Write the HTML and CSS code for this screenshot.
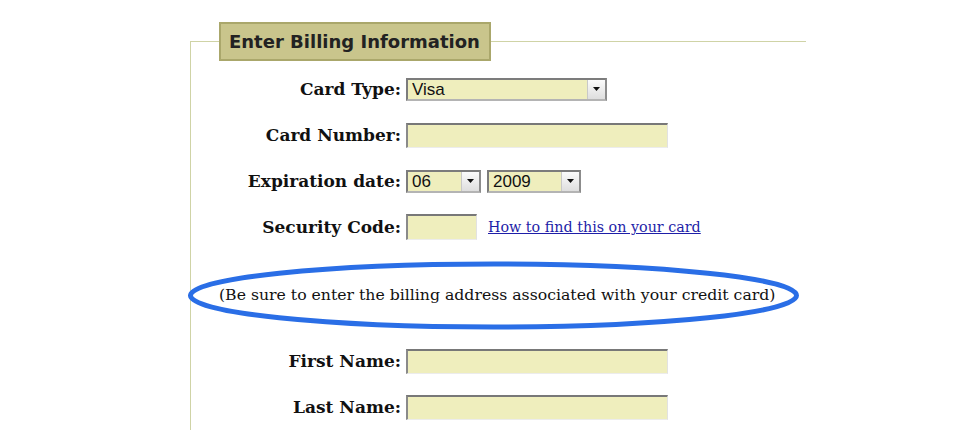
FILE: index.html
```html
<!DOCTYPE html>
<html lang="en">
<head>
  <meta charset="UTF-8" />
  <title>Billing Information</title>
  <link rel="stylesheet" href="styles.css">
</head>
<body>
  <form class="billing">
    <fieldset>
      <legend>Enter Billing Information</legend>

      <div class="row">
        <label for="cardType">Card Type:</label>
        <span class="select-box wide">
          <select id="cardType">
            <option>Visa</option>
            <option>MasterCard</option>
            <option>American Express</option>
          </select>
          <span class="arrow"><svg width="7" height="4" viewBox="0 0 7 4"><path d="M0 0h7L3.5 4z" fill="#111"/></svg></span>
        </span>
      </div>

      <div class="row">
        <label for="cardNumber">Card Number:</label>
        <input type="text" id="cardNumber" class="text long">
      </div>

      <div class="row">
        <label for="expMonth">Expiration date:</label>
        <span class="select-box month">
          <select id="expMonth">
            <option>06</option>
          </select>
          <span class="arrow"><svg width="7" height="4" viewBox="0 0 7 4"><path d="M0 0h7L3.5 4z" fill="#111"/></svg></span>
        </span>
        <span class="select-box year">
          <select id="expYear">
            <option>2009</option>
          </select>
          <span class="arrow"><svg width="7" height="4" viewBox="0 0 7 4"><path d="M0 0h7L3.5 4z" fill="#111"/></svg></span>
        </span>
      </div>

      <div class="row">
        <label for="secCode">Security Code:</label>
        <input type="text" id="secCode" class="text short">
        <a href="#" class="help">How to find this on your card</a>
      </div>

      <p class="note">(Be sure to enter the billing address associated with your credit card)</p>

      <div class="row">
        <label for="firstName">First Name:</label>
        <input type="text" id="firstName" class="text long">
      </div>

      <div class="row">
        <label for="lastName">Last Name:</label>
        <input type="text" id="lastName" class="text long">
      </div>
    </fieldset>
  </form>

  <!-- highlight drawn over the note -->
  <svg class="circle" width="615" height="71" viewBox="0 0 615 71">
    <ellipse cx="307.5" cy="35.5" rx="303" ry="31.5" fill="none" stroke="#2a6ee6" stroke-width="5"/>
  </svg>
</body>
</html>
```

FILE: styles.css
```css
body {
  margin: 0;
  background: #fff;
  color: #111;
  font-family: 'DejaVu Serif', Georgia, serif;
}

.billing {
  padding: 22px 0 0 190px;
}

fieldset {
  width: 587px;
  margin: 0;
  padding: 5px 0 0 28px;
  border: none;
  border-top: 1px solid #cfd3a6;
  border-left: 1px solid #cfd3a6;
}

legend {
  background: #c9c58c;
  border: 2px solid #aaa76b;
  padding: 8px 9px 8px 8px;
  font-family: 'DejaVu Sans', Verdana, sans-serif;
  font-weight: bold;
  font-size: 18px;
  line-height: 19px;
  color: #222;
}

.row {
  display: flex;
  align-items: center;
  height: 46px;
  margin-left: -28px;
}

.row label {
  width: 210px;
  margin-right: 5px;
  text-align: right;
  font-weight: bold;
  font-size: 17px;
}

.text {
  box-sizing: border-box;
  height: 25px;
  margin: 0;
  background: #efeebd;
  border-style: solid;
  border-width: 2px 1px 1px 2px;
  border-color: #787878 #e2e2e2 #ececec #8a8a8a;
  font-size: 15px;
}

.long {
  width: 262px;
}

.short {
  width: 71px;
  height: 26px;
}

.help {
  margin-left: 11px;
  color: #1e1ea8;
  font-size: 14.3px;
}

.select-box {
  box-sizing: border-box;
  display: inline-flex;
  height: 23px;
  background: #efeebd;
  border-style: solid;
  border-width: 2px;
  border-color: #7c7c7c #8c8c8c #b4b4b4 #7c7c7c;
}

.select-box select {
  flex: 1;
  min-width: 0;
  appearance: none;
  border: none;
  background: transparent;
  padding: 0 0 0 4px;
  font-family: 'Liberation Sans', Arial, sans-serif;
  font-size: 17px;
  color: #111;
}

.select-box .arrow {
  width: 17px;
  display: flex;
  align-items: center;
  justify-content: center;
  background: linear-gradient(#fbfbfb, #dedede);
  border-left: 1px solid #c8c8c8;
}

.wide {
  width: 201px;
}

.month {
  width: 75px;
  margin-right: 6px;
}

.year {
  width: 94px;
}

.note {
  height: 88px;
  margin: 0;
  display: flex;
  align-items: center;
  font-size: 15.7px;
}

.circle {
  position: absolute;
  left: 186px;
  top: 260px;
}
```
